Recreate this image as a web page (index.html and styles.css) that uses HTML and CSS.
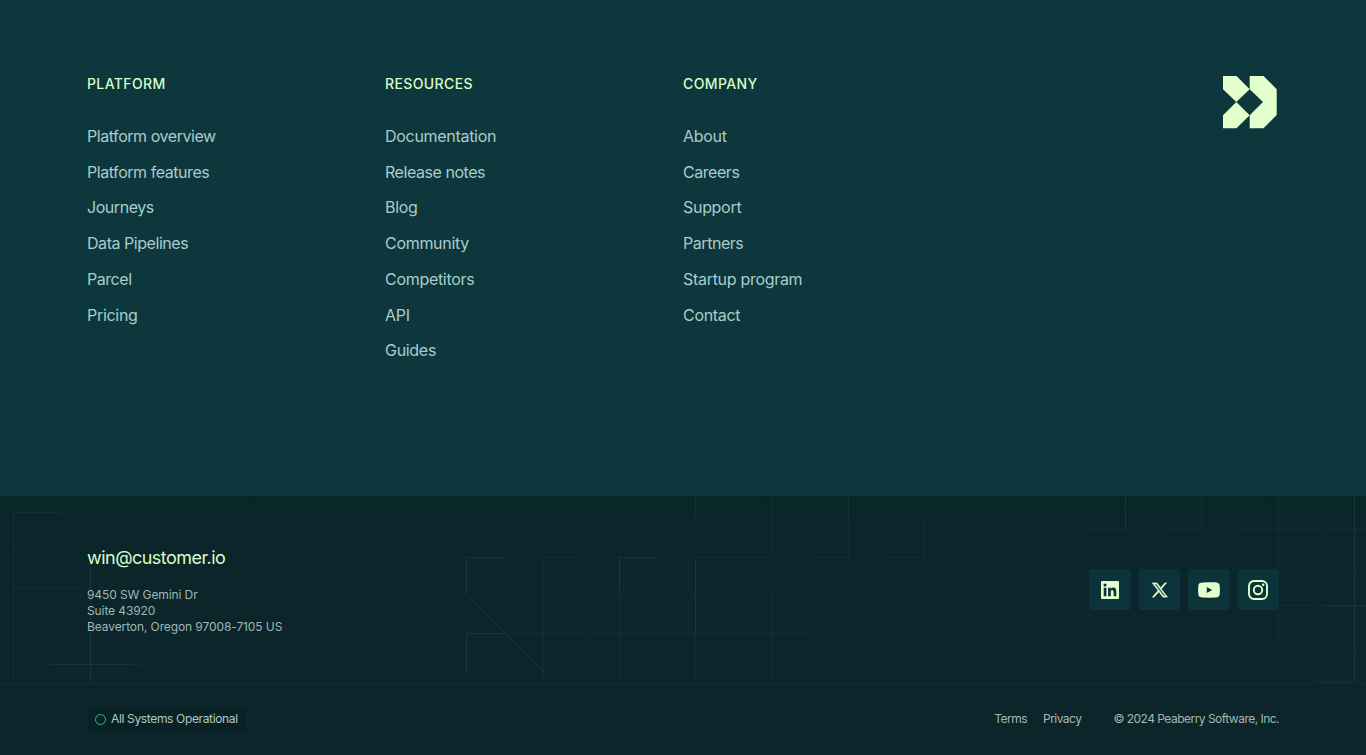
FILE: index.html
```html
<!DOCTYPE html>
<html lang="en">
<head>
<meta charset="utf-8">
<title>Customer.io</title>
<link rel="stylesheet" href="styles.css">
</head>
<body>
<footer class="footer">
  <div class="sitemap">
    <nav class="column">
      <h2 class="heading">PLATFORM</h2>
      <ul class="links">
        <li><a class="link snug">Platform overview</a></li>
        <li><a class="link snug">Platform features</a></li>
        <li><a class="link snug">Journeys</a></li>
        <li><a class="link snug">Data Pipelines</a></li>
        <li><a class="link snug">Parcel</a></li>
        <li><a class="link">Pricing</a></li>
      </ul>
    </nav>
    <nav class="column">
      <h2 class="heading">RESOURCES</h2>
      <ul class="links">
        <li><a class="link">Documentation</a></li>
        <li><a class="link snug">Release notes</a></li>
        <li><a class="link">Blog</a></li>
        <li><a class="link">Community</a></li>
        <li><a class="link">Competitors</a></li>
        <li><a class="link">API</a></li>
        <li><a class="link">Guides</a></li>
      </ul>
    </nav>
    <nav class="column">
      <h2 class="heading">COMPANY</h2>
      <ul class="links">
        <li><a class="link">About</a></li>
        <li><a class="link snug">Careers</a></li>
        <li><a class="link">Support</a></li>
        <li><a class="link snug">Partners</a></li>
        <li><a class="link">Startup program</a></li>
        <li><a class="link">Contact</a></li>
      </ul>
    </nav>
    <svg class="logo" viewBox="0 0 54 53" width="54" height="53">
      <path d="M0 0H13.5L26.7 13.2V0H40.5L53.7 13.2V39L40.5 52.3H26.7V39.2L13.5 52.3H0V39.2L13.3 26.1L0 13.2ZM26.7 13.2L13.3 26.1L26.7 39.2L40 26.1Z" fill="#e2ffcc" fill-rule="evenodd"/>
    </svg>
  </div>

  <div class="contact">
    <svg class="pattern" viewBox="0 496 1366 187" width="1366" height="187" fill="none">
      <g class="trace">
        <path d="M13.500 683V512.500H62L90 540M0 536L90 588M14 588.500H90M50 664.500H142"/>
        <path class="bright" d="M90.500 568V683M54 664.500H128"/>
        <path class="bright" d="M466.500 595V557.500H504M466.500 672V633.500H504M466.500 595L543 671M619.500 595V557.500H657M695.500 560V633"/>
        <path d="M504 557.500L543 596M543.500 683V557.500H582L658 633.500M543 596L620 672M619.500 595V683M657 557.500L734 633.500M504 633.500H810L848 671M695.500 633V683M695.500 557.500H734L771.500 595V683"/>
        <path d="M695.500 496V519L734 557.500M752 496L771.500 519L810 557.500H848.500V496M771.500 496V557.500H695.500M828 496L848.500 517M905 496L924.500 519V557.500H884"/>
        <path d="M1058 501L1087 529.500H1125.500V496M1166 529.500H1201.500V496M1240 529.500H1366M1278.500 496V644L1316 681.500H1354.500V496M1316 529.500L1366 580M1278.500 605.500H1366M1278.500 567L1366 655"/>
        <path class="bright" d="M1125.500 496V529M1354.500 496V681M1326 605.500H1366"/>
      </g>
    </svg>
    <div class="company">
      <a class="email">win@customer.io</a>
      <address class="address">9450 SW Gemini Dr<br>Suite 43920<br>Beaverton, Oregon 97008-7105 US</address>
    </div>
    <div class="social">
      <a class="tile" aria-label="LinkedIn">
        <svg viewBox="0 0 24 24" width="24" height="24"><path fill="#e2ffcc" fill-rule="evenodd" d="M4 3H20Q21 3 21 4V20Q21 21 20 21H4Q3 21 3 20V4Q3 3 4 3ZM5.700 9.800V18.200H8.400V9.800ZM7.050 5.500A1.550 1.550 0 1 0 7.050 8.600A1.550 1.550 0 1 0 7.050 5.500ZM10.100 9.800V18.200H12.800V14Q12.800 12 14.200 12Q15.600 12 15.600 14V18.200H18.300V13.500Q18.300 9.600 15.300 9.600Q13.500 9.600 12.700 11V9.800Z"/></svg>
      </a>
      <a class="tile" aria-label="X">
        <svg viewBox="0 0 24 24" width="24" height="24"><path fill="#e2ffcc" stroke="#e2ffcc" stroke-width=".3" fill-rule="evenodd" d="M4 4.800H9L12.600 9.600L16.800 4.800H18.800L13.500 10.900L19.700 19.200H14.900L10.900 13.900L6.200 19.200H4.100L9.900 12.600ZM6.700 6.100L15.700 17.900H17.200L8.200 6.100Z"/></svg>
      </a>
      <a class="tile" aria-label="YouTube">
        <svg viewBox="0 0 24 24" width="24" height="24"><path fill="#e2ffcc" fill-rule="evenodd" d="M12 4.300C17 4.300 20 4.400 21 4.900Q22.300 5.500 22.600 7Q23.300 12 22.600 17Q22.300 18.500 21 19.100Q20 19.700 12 19.700Q4 19.700 3 19.100Q1.700 18.500 1.400 17Q.7 12 1.400 7Q1.700 5.500 3 4.900Q4 4.300 12 4.300ZM9.800 8.900V15.100L15.200 12Z"/></svg>
      </a>
      <a class="tile" aria-label="Instagram">
        <svg viewBox="0 0 24 24" width="24" height="24" fill="none" stroke="#e2ffcc" stroke-width="1.900"><rect x="3" y="3" width="18" height="18" rx="5"/><circle cx="12" cy="12" r="4.200"/><circle cx="17.200" cy="6.800" r="1.250" fill="#e2ffcc" stroke="none"/></svg>
      </a>
    </div>
  </div>

  <div class="legal">
    <a class="status"><span class="status-ring"></span>All Systems Operational</a>
    <div class="legal-links">
      <a class="terms">Terms</a>
      <a class="privacy">Privacy</a>
      <span class="copyright">© 2024 Peaberry Software, Inc.</span>
    </div>
  </div>
</footer>
</body>
</html>
```
FILE: styles.css
```css
* { box-sizing: border-box; }

body {
  margin: 0;
  background: #0b252a;
  color: #a8cdc9;
  font-family: Inter, "Liberation Sans", sans-serif;
}

.footer {
  display: flex;
  flex-direction: column;
  height: 755px;
  overflow: hidden;
}

.sitemap {
  display: flex;
  height: 496px;
  padding: 76px 89px 0 87px;
  background: #0d363d;
}

.column {
  flex: 0 0 298px;
  margin-top: -1px;
}

.heading {
  margin: 0;
  color: #d6fdc6;
  font-size: 14px;
  font-weight: 500;
  line-height: 17px;
  letter-spacing: 0.38px;
}

.links {
  margin: 26.900px 0 0;
  padding: 0;
  list-style: none;
  font-size: 16px;
  line-height: 35.75px;
  letter-spacing: -0.3px;
}

.links li { height: 35.75px; }

.snug { letter-spacing: -0.45px; }

.logo {
  display: block;
  flex: none;
  margin-left: auto;
}

.contact {
  position: relative;
  display: flex;
  justify-content: space-between;
  align-items: flex-start;
  height: 188px;
  padding: 0 87px;
  border-bottom: 1px solid #103035;
  background: linear-gradient(#082628, #0b252a 35px);
}

.pattern {
  position: absolute;
  top: 0;
  left: 0;
}

.trace { stroke: #0f2f33; }
.bright { stroke: #16373a; }

.company {
  position: relative;
  padding-top: 50px;
}

.email {
  display: block;
  color: #d6fdc6;
  font-size: 18px;
  line-height: 24px;
  letter-spacing: -0.53px;
}

.address {
  margin-top: 17px;
  color: #9fb8b6;
  font-size: 12px;
  font-style: normal;
  line-height: 16px;
  letter-spacing: -0.1px;
}

.social {
  position: relative;
  display: flex;
  gap: 8px;
  padding-top: 73px;
}

.tile {
  display: flex;
  align-items: center;
  justify-content: center;
  width: 41.4px;
  height: 41px;
  border-radius: 3px;
  background: #0b343a;
}

.legal {
  display: flex;
  justify-content: space-between;
  align-items: center;
  height: 70px;
  padding: 0 87px;
  color: #9fb8b6;
  font-size: 12px;
  line-height: 16px;
  letter-spacing: -0.52px;
}

.status {
  display: flex;
  align-items: center;
  gap: 5px;
  height: 24px;
  padding: 0 8px;
  border-radius: 3px;
  background: #092125;
  color: #aec9c6;
  letter-spacing: -0.35px;
}

.status-ring {
  width: 11px;
  height: 11px;
  border: 1px solid #45ad9c;
  border-radius: 50%;
}

.legal-links { display: flex; }
.terms { margin-right: 16px; }
.privacy { margin-right: 32px; }
.terms, .privacy { letter-spacing: -0.52px; }
```
